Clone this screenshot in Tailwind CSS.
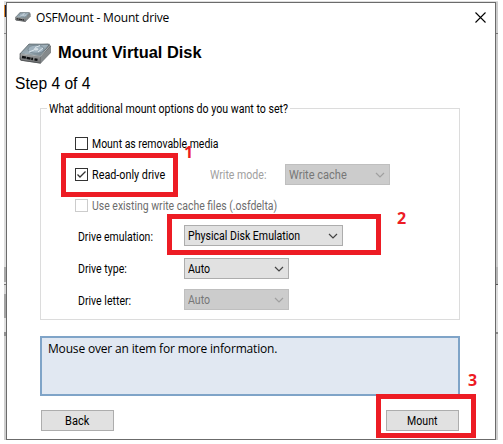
<!DOCTYPE html>
<html lang="en">
<head>
<meta charset="utf-8">
<title>OSFMount - Mount drive</title>
<script src="https://cdn.jsdelivr.net/npm/@tailwindcss/browser@4"></script>
</head>
<body class="w-[503px] h-[444px] overflow-hidden bg-white font-['Roboto',sans-serif] text-[12px] leading-[14px] text-black">
<svg class="absolute h-0 w-0">
  <defs>
    <linearGradient id="top" x1="0" y1="0" x2="1" y2="1"><stop offset="0" stop-color="#77858a"/><stop offset=".5" stop-color="#9fb0ba"/><stop offset="1" stop-color="#5f6c72"/></linearGradient>
    <linearGradient id="side" x1="0" y1="0" x2="0" y2="1"><stop offset="0" stop-color="#a5a7a7"/><stop offset="1" stop-color="#66686a"/></linearGradient>
  </defs>
  <symbol id="drive" viewBox="0 0 33 21">
    <path d="M1 11.5 10 1.5 29 .8 32 3v6.5L21.5 20.5 2 17.8.5 16z" fill="#5f6365"/>
    <path d="M1 10.8 10 1 30.5 1.2 21.5 13.5z" fill="url(#top)" stroke="#566267" stroke-width=".7"/>
    <ellipse cx="17" cy="6.2" rx="8" ry="4" fill="#a0b2be" stroke="#667782" stroke-width=".6"/>
    <ellipse cx="17" cy="6.2" rx="2.4" ry="1.2" fill="#d5dfe5"/>
    <path d="M16 4.5 21 2.5M10 9l5-2M19 9l5-4" stroke="#dce6ec" stroke-width="1"/>
    <path d="M1 10.8 21.5 13.5V20.2L1.5 17z" fill="url(#side)" stroke="#494d4f" stroke-width=".6"/>
    <path d="M21.5 13.5 32 3v6.5L21.5 20.2z" fill="#858a8c"/>
    <path d="M3 14 14 16M15.5 16.4l3 .5" stroke="#0c0e10" stroke-width="2.3" stroke-dasharray="4 .7"/>
    <path d="M2 10.9 21.5 13.3 31 2.4" fill="none" stroke="#ced4d6" stroke-width=".7"/>
  </symbol>
  <symbol id="chev" viewBox="0 0 10 6"><path d="M1 1 5 5 9 1" fill="none" stroke="currentColor" stroke-width="1.2"/></symbol>
</svg>
<div class="relative ml-1 flex h-[440px] w-[494px] flex-col">
  <div class="mt-px h-px w-full shrink-0 bg-[#dedede]"></div>
  <div class="flex h-[438px]">
    <div class="flex w-[2px] flex-col bg-[#dddddd]">
      <div class="h-[3px]"></div>
      <div class="h-[12px] bg-[#1b1b32] border-l border-[#e08a2c]"></div>
      <div class="h-[16px]"></div>
      <div class="h-px bg-[#888]"></div>
      <div class="h-[233px] bg-[#dedede]"></div>
      <div class="h-[15px] bg-[#a9a9a9]"></div>
      <div class="h-[2px] bg-[#e4e4e4]"></div>
      <div class="h-px bg-[#777]"></div>
      <div class="h-[9px] bg-[#d5d5d5]"></div>
      <div class="h-[24px] bg-[#a3a3a3]"></div>
      <div class="h-[14px] bg-[#e2e2e2]"></div>
      <div class="h-[4px] bg-[#919191]"></div>
      <div class="grow bg-[#cfcfcf]"></div>
    </div>
    <main class="flex w-[490px] flex-col border border-[#6b6b6b] bg-white">
      <header class="flex h-[28px] items-center pl-2 pr-[9px]">
        <svg class="mt-[-1px] h-[10px] w-4"><use href="#drive"/></svg>
        <span class="ml-[5px] mt-px whitespace-nowrap font-['Open_Sans',sans-serif] text-[12px] leading-4 tracking-[-0.19px]">OSFMount - Mount drive</span>
        <svg class="ml-auto h-[11px] w-[11px]" viewBox="0 0 11 11"><path d="M.5.5l10 10M10.5.5l-10 10" stroke="#000" stroke-width="1.1"/></svg>
      </header>
      <div class="flex h-[45px] items-center pl-3">
        <svg class="h-[21px] w-[33px]"><use href="#drive"/></svg>
        <h1 class="ml-[6px] mt-[-3px] whitespace-nowrap font-['Liberation_Sans',sans-serif] text-[16.4px] font-bold leading-5">Mount Virtual Disk</h1>
      </div>
      <h2 class="mt-[-1px] h-[33px] pl-[8px] font-['Liberation_Sans',sans-serif] text-[15.6px] leading-[18px]">Step 4 of 4</h2>
      <section class="ml-[33px] flex h-[212px] w-[420px] flex-col border border-[#dcdcdc]">
        <h3 class="ml-[6px] mt-[-8px] h-[16px] w-[243px] whitespace-nowrap bg-white pl-[2px] leading-4"><span class="inline-block origin-left scale-x-[0.884]">What additional mount options do you want to set?</span></h3>
        <div class="ml-[34px] mt-5 flex h-[13px] items-center whitespace-nowrap">
          <i class="mr-[4px] h-[13px] w-[13px] border border-[#333]"></i><span class="origin-left scale-x-[0.872]">Mount as removable media</span>
        </div>
        <div class="ml-[34px] mt-[14px] flex h-[21px] items-center whitespace-nowrap">
          <i class="mr-[4px] h-[13px] w-[13px] border border-[#333]"><svg class="h-[11px] w-[11px]" viewBox="0 0 11 11"><path d="M1.5 5.5 4 8 9.5 2.5" fill="none" stroke="#333" stroke-width="1.3"/></svg></i>
          <span class="w-[118px] origin-left scale-x-[0.9]">Read-only drive</span>
          <span class="w-[75px] origin-left scale-x-[0.88] text-[#a0a0a0]">Write mode:</span>
          <div class="flex h-[21px] w-[105px] items-center justify-between border border-[#bfbfbf] bg-[#ccc] pl-[3px] pr-1 text-[#777]"><span class="origin-left scale-x-[0.92]">Write cache</span><svg class="h-[6px] w-[10px] text-[#a0a0a0]"><use href="#chev"/></svg></div>
        </div>
        <div class="ml-[34px] mt-[14px] flex h-[13px] items-center whitespace-nowrap text-[#6d6d6d]">
          <i class="mr-[4px] h-[13px] w-[13px] border border-[#ccc]"></i><span class="origin-left scale-x-[0.872]">Use existing write cache files (.osfdelta)</span>
        </div>
        <div class="ml-[37px] mt-[13px] flex h-[21px] items-center whitespace-nowrap">
          <span class="w-[106px] origin-left scale-x-[0.87] pt-[2px]">Drive emulation:</span>
          <div class="flex h-[21px] w-[159px] items-center justify-between border border-[#adadad] bg-[#e1e1e1] pl-[3px] pr-1"><span class="origin-left scale-x-[0.88]">Physical Disk Emulation</span><svg class="h-[6px] w-[10px] shrink-0 text-[#444]"><use href="#chev"/></svg></div>
        </div>
        <div class="ml-[37px] mt-[12px] flex h-[21px] items-center whitespace-nowrap">
          <span class="w-[106px] origin-left scale-x-[0.88]">Drive type:</span>
          <div class="flex h-[21px] w-[105px] items-center justify-between border border-[#adadad] bg-[#e1e1e1] pl-[3px] pr-1"><span class="origin-left scale-x-[0.88]">Auto</span><svg class="h-[6px] w-[10px] text-[#444]"><use href="#chev"/></svg></div>
        </div>
        <div class="ml-[37px] mt-[10px] flex h-[21px] items-center whitespace-nowrap">
          <span class="w-[106px] origin-left scale-x-[0.88] pt-[2px]">Drive letter:</span>
          <div class="flex h-[21px] w-[105px] items-center justify-between border border-[#bfbfbf] bg-[#ccc] pl-[3px] pr-1 text-[#777]"><span class="origin-left scale-x-[0.88]">Auto</span><svg class="h-[6px] w-[10px] text-[#a0a0a0]"><use href="#chev"/></svg></div>
        </div>
      </section>
      <section class="ml-[33px] mt-4 h-[60px] w-[420px] border-2 border-[#7fa4c8] bg-[#e1e8f2] pl-[6px] pt-[3px] font-['Open_Sans',sans-serif] text-[12px] leading-4 tracking-[-0.17px]">Mouse over an item for more information.</section>
      <footer class="ml-[34px] mt-[14px] flex w-[418px] justify-between">
        <button class="h-[21px] w-[73px] border border-[#adadad] bg-[#e1e1e1]"><span class="inline-block scale-x-[0.92]">Back</span></button>
        <button class="h-[21px] w-[73px] border border-[#adadad] bg-[#e1e1e1]"><span class="inline-block scale-x-[0.88]">Mount</span></button>
      </footer>
    </main>
    <div class="flex w-[2px] flex-col bg-[#cccccc]">
      <div class="h-[31px]"></div>
      <div class="h-px bg-[#777]"></div>
      <div class="h-[233px]"></div>
      <div class="h-[17px] bg-[#b5b5b5]"></div>
      <div class="h-px bg-[#555]"></div>
      <div class="h-[47px] bg-[#dedede]"></div>
      <div class="h-[2px] bg-[#888]"></div>
      <div class="grow bg-[#d0d0d0]"></div>
    </div>
  </div>
  <div class="absolute left-[57px] top-[153px] h-[44px] w-[117px] border-[5px] border-[#ed1c24]"></div>
  <div class="absolute left-[163px] top-[214px] h-[41px] w-[214px] border-[5px] border-[#ed1c24]"></div>
  <div class="absolute left-[372px] top-[394px] h-[44px] w-[100px] border-[5px] border-[#ed1c24]"></div>
  <b class="absolute left-[180px] top-[142px] font-['Open_Sans',sans-serif] text-[16px] leading-5 text-[#ed1c24]">1</b>
  <b class="absolute left-[393px] top-[208px] font-['Open_Sans',sans-serif] text-[16px] leading-5 text-[#ed1c24]">2</b>
  <b class="absolute left-[464px] top-[370px] font-['Open_Sans',sans-serif] text-[16px] leading-5 text-[#ed1c24]">3</b>
</div>
</body>
</html>
